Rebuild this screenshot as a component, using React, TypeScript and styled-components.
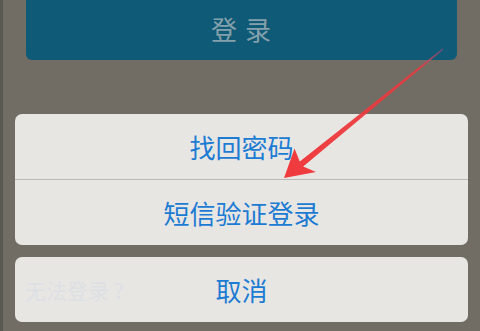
import React from "react";
import styled, { createGlobalStyle } from "styled-components";

const Global = createGlobalStyle`
  html, body { margin: 0; padding: 0; }
  body { background: #716d65; }
`;

const Screen = styled.div`
  position: relative;
  width: 480px;
  height: 331px;
  overflow: hidden;
  background: #716d65;
  border-left: 3px solid #5a5853;
  box-sizing: border-box;
  display: flex;
  flex-direction: column;
  font-family: "Noto Sans CJK SC", "Noto Sans", sans-serif;
`;

const LoginButton = styled.div`
  margin: -4px 23px 0 23px;
  height: 64px;
  flex: none;
  border-radius: 0 0 6px 6px;
  background: #0f5a77;
  display: flex;
  align-items: center;
  justify-content: center;
  color: #84a0aa;
  font-size: 26px;
  letter-spacing: 1px;
  box-sizing: border-box;
`;

const Sheet = styled.div<{ $top: number }>`
  margin: ${(p) => p.$top}px 12px 0 12px;
  flex: none;
  border-radius: 7px;
  background: #e8e6e3;
  display: flex;
  flex-direction: column;
  overflow: hidden;
`;

const Option = styled.div<{ $divider?: boolean }>`
  height: 65px;
  display: flex;
  align-items: center;
  justify-content: center;
  color: #1c7bd3;
  font-size: 26px;
  border-top: ${(p) => (p.$divider ? "1px solid #bcbab6" : "none")};
`;

const CancelRow = styled.div`
  height: 65px;
  display: grid;
  grid-template-columns: 1fr auto 1fr;
  align-items: center;
  color: #1c7bd3;
  font-size: 26px;
`;

const Ghost = styled.span`
  font-size: 21px;
  color: #dce0e4;
  padding-left: 10px;
  white-space: nowrap;
`;

const Arrow = styled.svg`
  position: absolute;
  left: -3px;
  top: 0;
  pointer-events: none;
`;

export default function App() {
  return (
    <>
      <Global />
      <Screen>
        <LoginButton>登 录</LoginButton>
        <Sheet $top={54}>
          <Option>找回密码</Option>
          <Option $divider>短信验证登录</Option>
        </Sheet>
        <Sheet $top={12}>
          <CancelRow>
            <Ghost>无法登录 ?</Ghost>
            <span>取消</span>
            <span />
          </CancelRow>
        </Sheet>
        <Arrow width="480" height="331" viewBox="0 0 480 331">
          <defs>
            <linearGradient id="ag" x1="443" y1="49" x2="284" y2="178" gradientUnits="userSpaceOnUse">
              <stop offset="0" stopColor="#b04a7a" stopOpacity="0.6" />
              <stop offset="0.15" stopColor="#e83a40" stopOpacity="0.9" />
              <stop offset="1" stopColor="#f03a3c" />
            </linearGradient>
          </defs>
          <polygon
            points="442.6,48.5 299.8,161.5 294.5,148.5 284,178 316,172 303.2,166.6 443.4,49.5"
            fill="url(#ag)"
          />
        </Arrow>
      </Screen>
    </>
  );
}
